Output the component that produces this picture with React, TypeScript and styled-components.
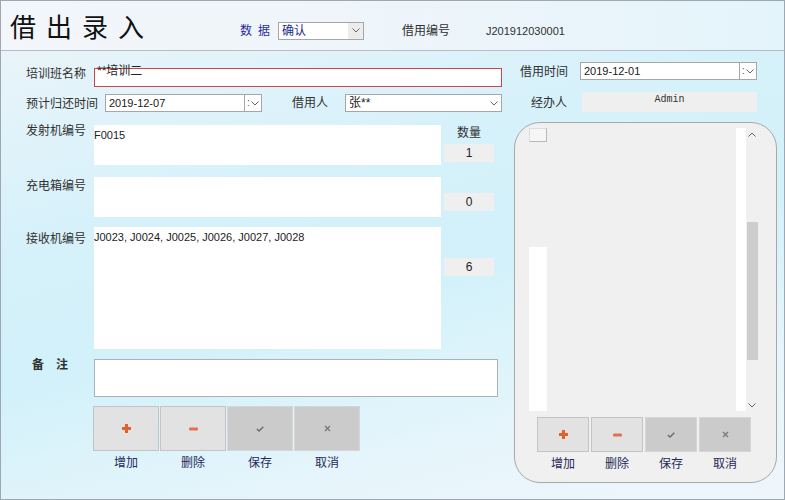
import styled, { createGlobalStyle } from "styled-components";

const Global = createGlobalStyle`
  html, body {
    margin: 0;
    padding: 0;
    width: 785px;
    height: 500px;
    overflow: hidden;
  }
  * { box-sizing: border-box; }
`

const Window = styled.div`
  width: 785px;
  height: 500px;
  border: 1px solid #9ea8b2;
  display: flex;
  flex-direction: column;
  font-family: "Liberation Sans", "Noto Sans CJK SC", sans-serif;
  font-size: 12px;
  color: #303030;
  background: linear-gradient(165deg, #eef5fa 0%, #d6f1fa 35%, #d2f1fa 55%, #e6f5fb 80%, #eef6fa 100%);
`

const Header = styled.div`
  height: 50px;
  flex-shrink: 0;
  border-bottom: 1px solid #b4bcc4;
  display: flex;
  align-items: center;
  padding-left: 9px;
  background: linear-gradient(90deg, #f3f6fa 0%, #eef5fa 50%, #e4f4fb 100%);
`

const Title = styled.div`
  width: 230px;
  font-family: "Noto Sans CJK SC", sans-serif;
  font-size: 26px;
  line-height: 30px;
  letter-spacing: 10px;
  color: #111;
`

const HeadLabel = styled.div<{ $blue?: boolean; $spacing?: number; $ml?: number; $w?: number; $latin?: boolean }>`
  margin-top: 10px;
  line-height: 18px;
  font-size: ${p => (p.$latin ? 11 : 12)}px;
  color: ${p => (p.$blue ? "#2a2aa6" : "#303030")};
  letter-spacing: ${p => p.$spacing ?? 0}px;
  margin-left: ${p => p.$ml ?? 0}px;
  width: ${p => (p.$w ? `${p.$w}px` : "auto")};
  white-space: nowrap;
`

const Combo = styled.div<{ $w: number; $mt?: number }>`
  width: ${p => p.$w}px;
  height: 18px;
  margin-top: ${p => p.$mt ?? 0}px;
  background: #fff;
  border: 1px solid #a6a6a6;
  display: flex;
  align-items: stretch;
  flex-shrink: 0;
`

const ComboText = styled.div<{ $color?: string; $size?: number }>`
  flex: 1;
  padding-left: 3px;
  line-height: 16px;
  font-size: ${p => p.$size ?? 12}px;
  color: ${p => p.$color ?? "#202020"};
  white-space: nowrap;
  overflow: hidden;
`

const ComboArrow = styled.div<{ $shade?: boolean; $w?: number }>`
  width: ${p => p.$w ?? 15}px;
  display: flex;
  align-items: center;
  justify-content: center;
  background: ${p => (p.$shade ? "#ececec" : "transparent")};
`

const SpinButton = styled.div`
  width: 17px;
  border-left: 1px solid #a6a6a6;
  display: flex;
  align-items: center;
  justify-content: center;
  gap: 1px;
  font-size: 10px;
  color: #555;
  line-height: 10px;
`

const Body = styled.div`
  flex: 1;
  padding: 11px 0 0 25px;
  display: flex;
  flex-direction: column;
`

const Row = styled.div<{ $h: number; $mt?: number }>`
  height: ${p => p.$h}px;
  margin-top: ${p => p.$mt ?? 0}px;
  display: flex;
  align-items: flex-start;
`

const Label = styled.div<{ $w: number; $mt?: number; $ml?: number }>`
  width: ${p => p.$w}px;
  margin-top: ${p => p.$mt ?? 0}px;
  margin-left: ${p => p.$ml ?? 0}px;
  line-height: 16px;
  font-family: "Noto Sans CJK SC", sans-serif;
  font-size: 12px;
  color: #303030;
  white-space: nowrap;
  flex-shrink: 0;
`

const NameBox = styled.div`
  width: 408px;
  height: 19px;
  margin-top: 6px;
  border: 1px solid #c8464a;
  background: #fff;
  padding-left: 2px;
`

const NameText = styled.div`
  margin-top: -5px;
  line-height: 14px;
  color: #222;
`

const InfoBox = styled.div`
  width: 175px;
  height: 20px;
  background: #efefef;
  text-align: center;
  font-family: "Liberation Mono", monospace;
  font-size: 10px;
  line-height: 16px;
  color: #333;
`

const Lower = styled.div`
  margin-top: 10px;
  display: flex;
  align-items: flex-start;
`

const FormColumn = styled.div`
  width: 488px;
  display: flex;
  flex-direction: column;
`

const TextArea = styled.div<{ $h: number; $w?: number; $border?: boolean }>`
  width: ${p => p.$w ?? 347}px;
  height: ${p => p.$h}px;
  background: #fff;
  border: ${p => (p.$border ? "1px solid #a9b2ba" : "none")};
  padding: 4px 0 0 0;
  font-size: 11px;
  line-height: 13px;
  color: #222;
  flex-shrink: 0;
`

const QtyColumn = styled.div`
  width: 50px;
  margin-left: 3px;
  display: flex;
  flex-direction: column;
  align-items: stretch;
`

const QtyTitle = styled.div`
  margin-top: -1px;
  line-height: 16px;
  text-align: center;
  font-family: "Noto Sans CJK SC", sans-serif;
  color: #303030;
`

const QtyBox = styled.div<{ $mt: number }>`
  margin-top: ${p => p.$mt}px;
  height: 18px;
  background: #efefef;
  text-align: center;
  line-height: 18px;
  font-size: 12px;
  color: #222;
`

const RemarkLabel = styled.div`
  width: 68px;
  margin-top: -3px;
  padding-left: 6px;
  line-height: 16px;
  font-family: "Noto Sans CJK SC", sans-serif;
  font-weight: bold;
  letter-spacing: 12px;
  color: #303030;
`

const ButtonBar = styled.div<{ $ml: number; $gap: number; $mt: number }>`
  display: flex;
  gap: ${p => p.$gap}px;
  margin-left: ${p => p.$ml}px;
  margin-top: ${p => p.$mt}px;
`

const ButtonItem = styled.div`
  display: flex;
  flex-direction: column;
  align-items: center;
`

const ToolButton = styled.div<{ $w: number; $h: number; $dark?: boolean }>`
  width: ${p => p.$w}px;
  height: ${p => p.$h}px;
  background: ${p => (p.$dark ? "#cbcbcb" : "#e2e2e2")};
  border: 1px solid ${p => (p.$dark ? "#d6d6d6" : "#c4c4c4")};
  display: flex;
  align-items: center;
  justify-content: center;
`

const ButtonLabel = styled.div`
  margin-top: 3px;
  line-height: 16px;
  font-family: "Noto Sans CJK SC", sans-serif;
  font-size: 12px;
  color: #1e2a5a;
`

const Panel = styled.div`
  width: 263px;
  height: 361px;
  border: 1px solid #a8a8a8;
  border-radius: 26px;
  background: #f0f0f0;
  padding: 5px 0 0 14px;
  display: flex;
  flex-direction: column;
`

const ListArea = styled.div`
  width: 229px;
  height: 283px;
  display: flex;
`

const RowHeaderColumn = styled.div`
  width: 18px;
  display: flex;
  flex-direction: column;
  justify-content: space-between;
`

const CornerCell = styled.div`
  height: 14px;
  background: #f6f6f6;
  border: 1px solid #dcdcdc;
  border-right-color: #b8b8b8;
  border-bottom-color: #b8b8b8;
`

const RowHeaderBlank = styled.div`
  height: 164px;
  background: #fff;
`

const ListBody = styled.div`
  flex: 1;
`

const WhiteStrip = styled.div`
  width: 10px;
  background: #fff;
`

const ScrollBar = styled.div`
  width: 12px;
  display: flex;
  flex-direction: column;
  align-items: center;
`

const ScrollArrow = styled.div`
  height: 12px;
  display: flex;
  align-items: center;
  justify-content: center;
`

const ScrollThumb = styled.div`
  width: 11px;
  height: 138px;
  margin-top: 82px;
  background: #cdcdcd;
`

const Spacer = styled.div`
  flex: 1;
`

const Chevron = ({ up = false }: { up?: boolean }) => (
  <svg width="8" height="5" viewBox="0 0 8 5">
    <polyline
      points={up ? "0.5,4.5 4,1 7.5,4.5" : "0.5,0.5 4,4 7.5,0.5"}
      fill="none"
      stroke="#666"
      strokeWidth="1"
    />
  </svg>
)

const PlusIcon = () => (
  <svg width="9" height="9" viewBox="0 0 9 9">
    <path d="M3 0h3v3h3v3H6v3H3V6H0V3h3z" fill="#e2622a" />
  </svg>
)

const MinusIcon = () => (
  <svg width="9" height="4" viewBox="0 0 9 4">
    <rect x="0" y="0.5" width="9" height="3" rx="1" fill="#e4704e" />
  </svg>
)

const CheckIcon = () => (
  <svg width="8" height="6" viewBox="0 0 8 6">
    <polyline points="0.8,3 3,5 7.3,0.8" fill="none" stroke="#6a6a6a" strokeWidth="1.4" />
  </svg>
)

const CrossIcon = () => (
  <svg width="7" height="7" viewBox="0 0 7 7">
    <path d="M1 1L6 6M6 1L1 6" stroke="#7a7a7a" strokeWidth="1.4" />
  </svg>
)

const actions = [
  { label: "增加", icon: <PlusIcon />, dark: false },
  { label: "删除", icon: <MinusIcon />, dark: false },
  { label: "保存", icon: <CheckIcon />, dark: true },
  { label: "取消", icon: <CrossIcon />, dark: true },
]

const DateField = ({ w, value, mt }: { w: number; value: string; mt?: number }) => (
  <Combo $w={w} $mt={mt}>
    <ComboText $size={11}>{value}</ComboText>
    <SpinButton>
      <span>:</span>
      <Chevron />
    </SpinButton>
  </Combo>
)

export default function App() {
  return (
    <>
      <Global />
      <Window>
        <Header>
          <Title>借出录入</Title>
          <HeadLabel $blue $spacing={6} $w={38}>数据</HeadLabel>
          <Combo $w={86} $mt={10}>
            <ComboText $color="#1a2a8a">确认</ComboText>
            <ComboArrow $shade>
              <Chevron />
            </ComboArrow>
          </Combo>
          <HeadLabel $ml={38} $w={84}>借用编号</HeadLabel>
          <HeadLabel $latin>J201912030001</HeadLabel>
        </Header>

        <Body>
          <Row $h={25}>
            <Label $w={68} $mt={3}>培训班名称</Label>
            <NameBox>
              <NameText>**培训二</NameText>
            </NameBox>
            <Label $w={60} $ml={18} $mt={1}>借用时间</Label>
            <DateField w={177} value="2019-12-01" />
          </Row>

          <Row $h={20} $mt={5}>
            <Label $w={79} $mt={3}>预计归还时间</Label>
            <DateField w={157} value="2019-12-07" mt={2} />
            <Label $w={53} $ml={30} $mt={2}>借用人</Label>
            <Combo $w={157} $mt={2}>
              <ComboText>张**</ComboText>
              <ComboArrow>
                <Chevron />
              </ComboArrow>
            </Combo>
            <Label $w={51} $ml={29} $mt={2}>经办人</Label>
            <InfoBox>Admin</InfoBox>
          </Row>

          <Lower>
            <FormColumn>
              <Row $h={40} $mt={3}>
                <Label $w={68} $mt={-3}>发射机编号</Label>
                <TextArea $h={40}>F0015</TextArea>
                <QtyColumn>
                  <QtyTitle>数量</QtyTitle>
                  <QtyBox $mt={4}>1</QtyBox>
                </QtyColumn>
              </Row>

              <Row $h={40} $mt={12}>
                <Label $w={68}>充电箱编号</Label>
                <TextArea $h={40} />
                <QtyColumn>
                  <QtyBox $mt={16}>0</QtyBox>
                </QtyColumn>
              </Row>

              <Row $h={122} $mt={10}>
                <Label $w={68} $mt={3}>接收机编号</Label>
                <TextArea $h={122}>J0023, J0024, J0025, J0026, J0027, J0028</TextArea>
                <QtyColumn>
                  <QtyBox $mt={31}>6</QtyBox>
                </QtyColumn>
              </Row>

              <Row $h={38} $mt={10}>
                <RemarkLabel>备注</RemarkLabel>
                <TextArea $h={38} $w={404} $border />
              </Row>

              <ButtonBar $ml={67} $gap={1} $mt={9}>
                {actions.map(a => (
                  <ButtonItem key={a.label}>
                    <ToolButton $w={66} $h={45} $dark={a.dark}>{a.icon}</ToolButton>
                    <ButtonLabel>{a.label}</ButtonLabel>
                  </ButtonItem>
                ))}
              </ButtonBar>
            </FormColumn>

            <Panel>
              <ListArea>
                <RowHeaderColumn>
                  <CornerCell />
                  <RowHeaderBlank />
                </RowHeaderColumn>
                <ListBody />
                <WhiteStrip />
                <ScrollBar>
                  <ScrollArrow>
                    <Chevron up />
                  </ScrollArrow>
                  <ScrollThumb />
                  <Spacer />
                  <ScrollArrow>
                    <Chevron />
                  </ScrollArrow>
                </ScrollBar>
              </ListArea>

              <ButtonBar $ml={8} $gap={2} $mt={6}>
                {actions.map(a => (
                  <ButtonItem key={a.label}>
                    <ToolButton $w={52} $h={35} $dark={a.dark}>{a.icon}</ToolButton>
                    <ButtonLabel>{a.label}</ButtonLabel>
                  </ButtonItem>
                ))}
              </ButtonBar>
            </Panel>
          </Lower>
        </Body>
      </Window>
    </>
  );
}
